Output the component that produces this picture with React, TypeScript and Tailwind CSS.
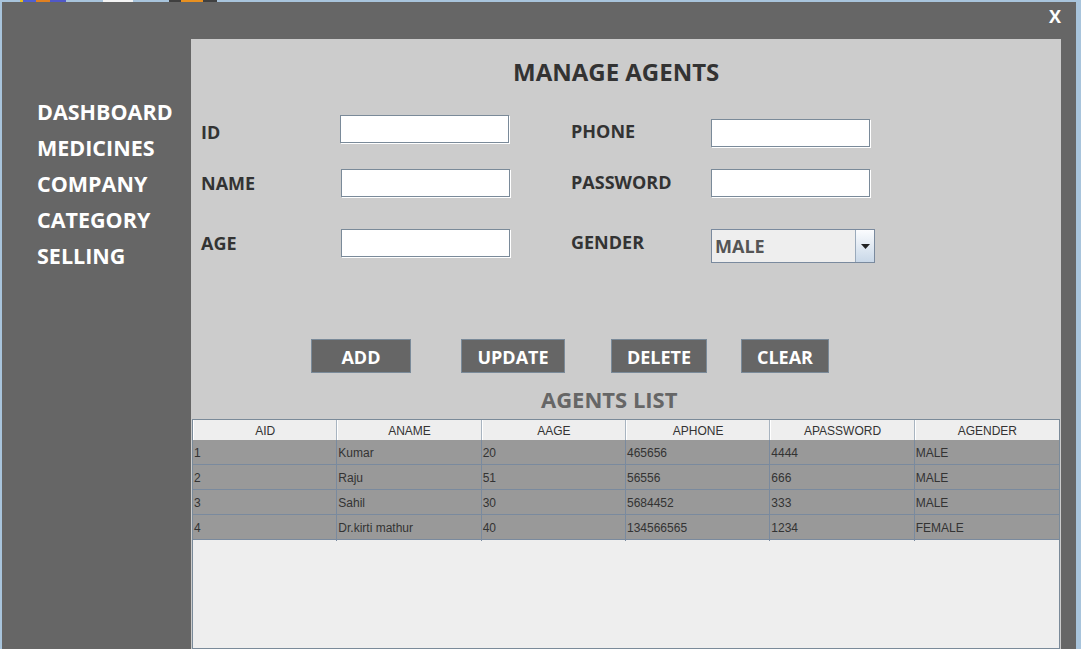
import React from 'react';

const font = { fontFamily: '"Open Sans", "Noto Sans", sans-serif' };

const agents = [
  ['1', 'Kumar', '20', '465656', '4444', 'MALE'],
  ['2', 'Raju', '51', '56556', '666', 'MALE'],
  ['3', 'Sahil', '30', '5684452', '333', 'MALE'],
  ['4', 'Dr.kirti mathur', '40', '134566565', '1234', 'FEMALE'],
];

const headers = ['AID', 'ANAME', 'AAGE', 'APHONE', 'APASSWORD', 'AGENDER'];

const Field: React.FC<{ w: string; mt?: string }> = ({ w, mt = 'mt-0' }) => (
  <div className={`${w} ${mt} h-[28px] bg-white border border-[#7a8a99] shadow-[1px_1px_0_#ffffff]`} />
);

const Label: React.FC<{ text: string; w: string; mt: string }> = ({ text, w, mt }) => (
  <div className={`${w} ${mt} text-[18px] leading-[24px] font-bold text-[#333333]`}>{text}</div>
);

const Button: React.FC<{ text: string; w: string }> = ({ text, w }) => (
  <button
    className={`${w} h-[34px] bg-[#666666] border border-[#7a8a99] text-white text-[18px] font-bold leading-none pt-[2px] flex items-center justify-center`}
  >
    {text}
  </button>
);

const App: React.FC = () => {
  return (
    <div className="w-[1081px] h-[649px] bg-[#a8c4dc] overflow-hidden flex flex-col" style={font}>
      {/* desktop strip behind the window */}
      <div className="h-[2px] flex">
        <div className="w-[20px]" />
        <div className="w-[3px] bg-[#e8c020]" />
        <div className="w-[13px] bg-[#5060d0]" />
        <div className="w-[14px] bg-[#e08020]" />
        <div className="w-[16px] bg-[#5058c8]" />
        <div className="w-[37px]" />
        <div className="w-[30px] bg-[#f4f4f4]" />
        <div className="w-[36px]" />
        <div className="w-[12px] bg-[#404040]" />
        <div className="w-[22px] bg-[#e89020]" />
        <div className="w-[14px] bg-[#404040]" />
      </div>

      <div className="flex-1 flex">
        <div className="w-[2px]" />
        <div className="w-[1074px] bg-[#666666] flex flex-col">
          {/* title bar */}
          <div className="h-[37px] flex justify-end items-start pr-[15px] pt-[2px]">
            <span className="text-white font-bold text-[18px] leading-[24px]">X</span>
          </div>

          <div className="flex-1 flex">
            {/* sidebar */}
            <nav className="w-[189px] pl-[35px] pt-[55px] flex flex-col">
              {['DASHBOARD', 'MEDICINES', 'COMPANY', 'CATEGORY', 'SELLING'].map((item) => (
                <span key={item} className="text-white font-bold text-[21.5px] leading-[36px]">
                  {item}
                </span>
              ))}
            </nav>

            {/* main panel */}
            <main className="w-[870px] bg-[#cccccc] flex flex-col">
              <h1 className="pt-[17px] pl-[322px] text-[24px] leading-[32px] font-bold text-[#333333]">
                MANAGE AGENTS
              </h1>

              <div className="mt-[27px] pl-[10px] flex items-start h-[32px]">
                <Label text="ID" w="w-[139px]" mt="mt-[5px]" />
                <Field w="w-[169px]" />
                <div className="w-[62px]" />
                <Label text="PHONE" w="w-[140px]" mt="mt-[4px]" />
                <Field w="w-[159px]" mt="mt-[4px]" />
              </div>

              <div className="mt-[22px] pl-[10px] flex items-start h-[28px]">
                <Label text="NAME" w="w-[140px]" mt="mt-[2px]" />
                <Field w="w-[169px]" />
                <div className="w-[61px]" />
                <Label text="PASSWORD" w="w-[140px]" mt="mt-[1px]" />
                <Field w="w-[159px]" />
              </div>

              <div className="mt-[32px] pl-[10px] flex items-start h-[34px]">
                <Label text="AGE" w="w-[140px]" mt="mt-[2px]" />
                <Field w="w-[169px]" />
                <div className="w-[61px]" />
                <Label text="GENDER" w="w-[140px]" mt="mt-[1px]" />
                <div className="w-[164px] h-[34px] flex border border-[#7a8a9e] bg-[#eeeeee]">
                  <span className="flex-1 pl-[3px] text-[18px] leading-[32px] font-bold text-[#555555]">MALE</span>
                  <div className="w-[19px] border-l border-[#9aaabb] bg-gradient-to-b from-[#fbfcfe] to-[#c9d8e8] flex items-center justify-center">
                    <svg width="9" height="5" viewBox="0 0 9 5">
                      <path d="M0 0h9L4.5 5z" fill="#222222" />
                    </svg>
                  </div>
                </div>
              </div>

              <div className="mt-[76px] pl-[120px] flex">
                <Button text="ADD" w="w-[100px]" />
                <div className="w-[50px]" />
                <Button text="UPDATE" w="w-[104px]" />
                <div className="w-[46px]" />
                <Button text="DELETE" w="w-[96px]" />
                <div className="w-[34px]" />
                <Button text="CLEAR" w="w-[88px]" />
              </div>

              <h2 className="mt-[12px] pl-[350px] text-[22px] leading-[28px] font-bold text-[#666666]">
                AGENTS LIST
              </h2>

              {/* table */}
              <div
                className="mt-[6px] ml-[1px] w-[868px] flex-1 bg-[#eeeeee] border border-[#7a8a99] flex flex-col"
                style={{ fontFamily: '"Liberation Sans", Arial, sans-serif' }}
              >
                <div className="grid grid-cols-6 h-[20px] bg-[#eeeeee]">
                  {headers.map((h) => (
                    <div
                      key={h}
                      className="border-r border-[#a8b4c0] last:border-r-0 border-l border-l-white text-center text-[12px] leading-[22px] text-[#333333]"
                    >
                      {h}
                    </div>
                  ))}
                </div>
                {agents.map((row) => (
                  <div key={row[0]} className="grid grid-cols-6 h-[25px] bg-[#999999] border-b border-[#7a8a9e]">
                    {row.map((cell, i) => (
                      <div
                        key={i}
                        className="border-r border-[#7a8a9e] last:border-r-0 pl-[1px] text-[12px] leading-[26px] text-[#333333]"
                      >
                        {cell}
                      </div>
                    ))}
                  </div>
                ))}
              </div>
            </main>
            <div className="w-[15px]" />
          </div>
        </div>
        <div className="w-[5px]" />
      </div>
    </div>
  );
};

export default App;
